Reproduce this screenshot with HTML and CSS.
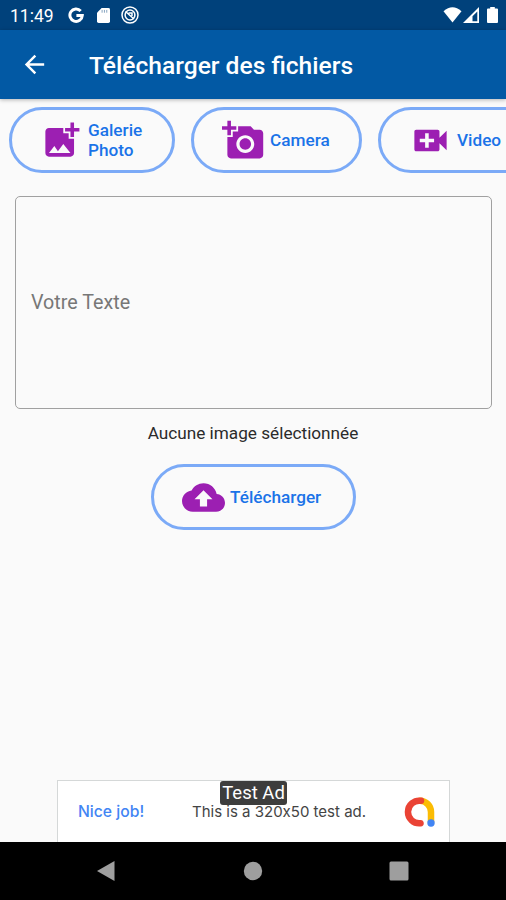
FILE: index.html
```html
<!DOCTYPE html>
<html lang="fr">
<head>
<meta charset="utf-8">
<title>Télécharger des fichiers</title>
<link rel="stylesheet" href="styles.css">
</head>
<body>
<div class="screen">
  <div class="status">
    <span class="clock">11:49</span>
    <svg class="st-google" viewBox="0 0 16 16"><path d="M12.700 4A6.200 6.200 0 1 0 14.300 8.500H8.400" fill="none" stroke="#fff" stroke-width="3"/></svg>
    <svg class="st-sd" viewBox="0 0 14 16"><path d="M5 0h7.2Q14 0 14 1.6v12.8Q14 16 12.2 16H1.8Q0 16 0 14.4V5z" fill="#fff"/><path d="M5.5 2v3M8 2v3M10.500 2v3" stroke="#00417b" stroke-width="1" opacity=".5"/></svg>
    <svg class="st-circle" viewBox="0 0 18 18" fill="none" stroke="#fff"><circle cx="9" cy="9" r="8" stroke-width="1.5"/><circle cx="9" cy="9" r="4.900" stroke-width="1.500"/><path d="M4.500 5.500l8.500 7.500M7.500 7h3.500v3" stroke-width="1.500"/></svg>
    <span class="grow"></span>
    <svg class="st-wifi" viewBox="0 0 18 16"><path d="M0 4.200Q9-3.800 18 4.200L9 15.500z" fill="#fff"/></svg>
    <svg class="st-signal" viewBox="0 0 16 16"><path d="M16 0v16H0z" fill="#fff"/><path d="M14.300 4.500v9.800H9.500V9.300z" fill="#00417b"/></svg>
    <svg class="st-battery" viewBox="0 0 11 16"><path d="M3.200 0h4.600v1.600H10q1 0 1 1V15q0 1-1 1H1q-1 0-1-1V2.600q0-1 1-1h2.200z" fill="#fff"/></svg>
  </div>
  <header class="appbar">
    <svg class="back" viewBox="0 0 24 24"><path d="M20 11H7.830l5.590-5.590L12 4l-8 8 8 8 1.410-1.410L7.830 13H20v-2z" fill="#fff"/></svg>
    <h1>Télécharger des fichiers</h1>
  </header>
  <main>
    <div class="actions">
      <button class="pill gallery">
        <svg class="icon" viewBox="0 0 24 24"><path d="M19 7v2.990s-1.990.010-2 0V7h-3s.010-1.990 0-2h3V2h2v3h3v2h-3zm-3 4V8h-3V5H5c-1.100 0-2 .900-2 2v12c0 1.100.900 2 2 2h12c1.100 0 2-.900 2-2v-8h-3zM5 19l3-4 2 3 3-4 4 5H5z"/></svg>
        <span>Galerie<br>Photo</span>
      </button>
      <button class="pill camera">
        <svg class="icon" viewBox="0 0 24 24"><path d="M3 4V1h2v3h3v2H5v3H3V6H0V4h3zm3 6V7h3V4h7l1.830 2H21c1.100 0 2 .900 2 2v12c0 1.100-.900 2-2 2H5c-1.100 0-2-.900-2-2V10h3zm7 9c2.760 0 5-2.240 5-5s-2.240-5-5-5-5 2.240-5 5 2.240 5 5 5zm-3.200-5c0 1.770 1.430 3.200 3.200 3.200s3.200-1.430 3.200-3.200-1.430-3.200-3.200-3.200-3.200 1.430-3.200 3.200z"/></svg>
        <span>Camera</span>
      </button>
      <button class="pill video">
        <svg class="icon" viewBox="0 0 24 24"><path d="M17 10.500V7c0-.550-.450-1-1-1H4c-.550 0-1 .450-1 1v10c0 .550.450 1 1 1h12c.550 0 1-.450 1-1v-3.500l4 4v-11l-4 4zM14 13h-3v3H9v-3H6v-2h3V8h2v3h3v2z"/></svg>
        <span>Video</span>
      </button>
    </div>
    <textarea class="field" placeholder="Votre Texte"></textarea>
    <p class="hint">Aucune image sélectionnée</p>
    <button class="pill upload">
      <svg class="icon" viewBox="0 0 24 24"><path d="M19.350 10.040C18.670 6.590 15.640 4 12 4 9.110 4 6.600 5.640 5.350 8.040 2.340 8.360 0 10.910 0 14c0 3.310 2.690 6 6 6h13c2.760 0 5-2.240 5-5 0-2.640-2.050-4.780-4.650-4.960zM14 13v4h-4v-4H7l5-5 5 5h-3z"/></svg>
      <span>Télécharger</span>
    </button>
  </main>
  <aside class="ad">
    <span class="ad-title">Nice job!</span>
    <span class="ad-text">This is a 320x50 test ad.</span>
    <svg class="ad-logo" viewBox="0 0 32 30" fill="none" stroke-width="6.500" stroke-linecap="round"><path d="M16 3.800A11.200 11.200 0 0 1 27 15v10" stroke="#fbbc04"/><path d="M17 3.800A11.300 11.300 0 1 0 16.500 26.200" stroke="#ea4335"/><circle cx="27" cy="26" r="3.700" fill="#4285f4"/></svg>
    <span class="ad-badge">Test Ad</span>
  </aside>
  <nav class="navbar">
    <svg viewBox="0 0 20 20"><path d="M18.500 0v20L1 10z"/></svg>
    <svg viewBox="0 0 20 20"><circle cx="10" cy="10" r="9.200"/></svg>
    <svg viewBox="0 0 20 20"><rect x=".5" y=".5" width="19" height="19" rx="1.500"/></svg>
  </nav>
</div>
</body>
</html>
```
FILE: styles.css
```css
* { box-sizing: border-box; }
body { margin: 0; font-family: Roboto, sans-serif; background: #fafafa; }
.screen { width: 506px; height: 900px; display: flex; flex-direction: column; overflow: hidden; }
svg { display: block; flex: none; }

.status { flex: none; height: 30px; display: flex; align-items: center; background: #00417b; color: #fff; padding: 0 8px 0 10px; }
.clock { width: 58px; font-size: 17.5px; padding-top: 2px; }
.grow { flex: 1; }
.st-google { width: 16px; height: 16px; margin-right: 13px; }
.st-sd { width: 13px; height: 15px; margin-right: 11px; }
.st-circle { width: 18px; height: 18px; }
.st-wifi { width: 19px; height: 16px; margin-right: 1px; }
.st-signal { width: 16px; height: 16px; margin-right: 8px; }
.st-battery { width: 11px; height: 16px; }

.appbar { flex: none; position: relative; height: 69px; display: flex; align-items: center; background: #0259a4; color: #fff; padding: 0 20px; box-shadow: 0 1px 4px rgba(0, 0, 0, .28); }
.back { width: 29px; height: 29px; }
.appbar h1 { margin: 2px 0 0 40px; font-size: 24.6px; font-weight: 500; line-height: 30px; white-space: nowrap; }

main { flex: 1; display: flex; flex-direction: column; align-items: center; min-height: 0; }
.actions { align-self: stretch; display: flex; gap: 16px; padding: 8px 0 0 9px; overflow: hidden; }
.pill { flex: none; height: 66px; margin: 0; display: flex; align-items: center; border: 3px solid #7baaf7; border-radius: 33px; background: transparent; color: #1a73e8; font: 500 17.2px/20px Roboto, sans-serif; text-align: left; white-space: nowrap; padding: 0 0 0 28px; }
.icon { width: 43px; height: 43px; fill: #9c1fb2; }
.pill span { margin-left: 5px; }
.gallery { width: 166px; }
.camera { width: 171px; }
.video { width: 162px; }
.upload { width: 205px; margin: 21px 0 0 1px; }

.field { flex: none; width: 477px; height: 213px; margin: 23px 0 0 1px; padding: 94px 15px 0; border: 1px solid #a0a0a0; border-radius: 5px; background: transparent; resize: none; outline: none; font: 19.7px/24px Roboto, sans-serif; }
.field::placeholder { color: #777; opacity: 1; }
.hint { margin: 14px 0 0; font-size: 17.2px; line-height: 20px; color: #2b2b2b; }

.ad { flex: none; position: relative; align-self: center; width: 393px; height: 62px; margin-left: 1px; display: flex; align-items: center; background: #fff; border: 1px solid #d5d8d8; border-bottom: 0; padding: 0 13px 0 20px; }
.ad-title { width: 114px; font: 500 15.7px/20px Inter, sans-serif; color: #4285f4; }
.ad-text { flex: 1; font: 15px/20px Inter, sans-serif; font-feature-settings: "calt" 0; color: #444; white-space: nowrap; }
.ad-logo { width: 32px; height: 30px; }
.ad-badge { position: absolute; top: 0; left: 162px; width: 67px; height: 24px; background: #3d3d3d; color: #fff; border-radius: 3px; font-size: 18.5px; line-height: 25px; text-align: center; white-space: nowrap; }

.navbar { flex: none; height: 58px; display: flex; justify-content: space-between; align-items: center; background: #000; padding: 0 97px 0 96px; }
.navbar svg { width: 20px; height: 20px; fill: #9e9e9e; }
```
